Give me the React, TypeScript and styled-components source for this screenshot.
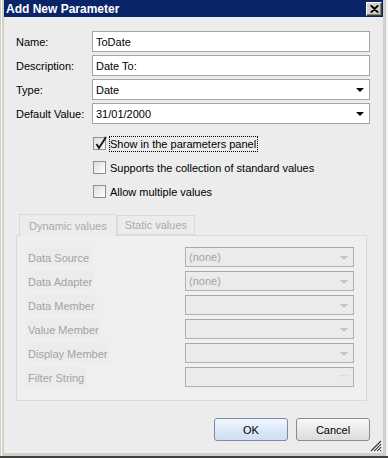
import { Fragment } from "react";
import styled, { createGlobalStyle } from "styled-components";

const GlobalStyle = createGlobalStyle`
    html, body {
        margin: 0;
        padding: 0;
        background: #d4d0c8;
    }
    * {
        box-sizing: border-box;
    }
`;

const Screen = styled.div`
    width: 388px;
    height: 458px;
    display: flex;
    flex-direction: column;
    overflow: hidden;
    font-family: "Liberation Sans", Arial, sans-serif;
    font-size: 11px;
    color: #000;
`;

const FrameRow = styled.div`
    flex: 1;
    display: flex;
`;

const Window = styled.div`
    width: 383px;
    display: flex;
    flex-direction: column;
    background: #d4d0c8;
    padding: 0 0 3px 4px;
    box-shadow: inset 1px 0 0 #cdc9c1, inset 2px 0 0 #ffffff;
`;

const RightEdge = styled.div`
    flex: 1;
    background: linear-gradient(to right, #d4d0c8 0 3px, #f3f3f3 3px);
`;

const BottomEdge = styled.div`
    height: 2px;
    background: #404040;
`;

const TitleBar = styled.div`
    height: 17px;
    background: #0a246a;
    display: flex;
    align-items: center;
    justify-content: space-between;
    padding: 0 1px 0 2px;
`;

const TitleText = styled.span`
    color: #fff;
    font-weight: bold;
    font-size: 12px;
    padding-top: 1px;
`;

const CloseButton = styled.div`
    width: 16px;
    height: 14px;
    background: #d4d0c8;
    border-top: 1px solid #fff;
    border-left: 1px solid #fff;
    border-right: 1px solid #404040;
    border-bottom: 1px solid #404040;
    box-shadow: inset -1px -1px 0 #808080;
    display: flex;
    align-items: center;
    justify-content: center;
`;

const Body = styled.div`
    position: relative;
    flex: 1;
    background: #ececec;
    padding: 14px 13px 0 12px;
    display: flex;
    flex-direction: column;
`;

const FormGrid = styled.div`
    display: grid;
    grid-template-columns: 76px 1fr;
    row-gap: 3px;
    align-items: center;
`;

const Label = styled.span`
    padding-top: 1px;
`;

const Field = styled.div`
    height: 21px;
    background: #fff;
    border: 1px solid #a4a4a4;
    display: flex;
    align-items: center;
    justify-content: space-between;
    padding: 0 5px 0 3px;
`;

const Arrow = styled.span<{ $disabled?: boolean }>`
    width: 0;
    height: 0;
    border-left: 4px solid transparent;
    border-right: 4px solid transparent;
    border-top: 4px solid ${p => (p.$disabled ? "#c4c4c4" : "#000")};
    margin-top: 1px;
`;

const CheckList = styled.div`
    margin-top: 11px;
    padding-left: 77px;
    display: flex;
    flex-direction: column;
    gap: 7px;
`;

const CheckRow = styled.div`
    height: 17px;
    display: flex;
    align-items: center;
    gap: 3px;
`;

const CheckBox = styled.span`
    position: relative;
    width: 13px;
    height: 13px;
    border: 1px solid #8f8f8f;
    background: linear-gradient(135deg, #dcdcdc, #ffffff);
`;

const CheckMark = styled.svg`
    position: absolute;
    left: 0;
    top: -3px;
`;

const CheckText = styled.span<{ $focused?: boolean }>`
    padding: 1px 1px 1px 0;
    border: 1px dotted ${p => (p.$focused ? "#000" : "transparent")};
`;

const TabStrip = styled.div`
    margin-top: 14px;
    padding-left: 3px;
    height: 21px;
    display: flex;
    align-items: flex-end;
    position: relative;
    z-index: 1;
`;

const Tab = styled.div<{ $active?: boolean }>`
    height: ${p => (p.$active ? "22px" : "20px")};
    padding: ${p => (p.$active ? "0 9px" : "0 7px")};
    margin-bottom: ${p => (p.$active ? "-1px" : "0")};
    display: flex;
    align-items: center;
    color: #aaaaaa;
    background: #ececec;
    border: 1px solid #dadada;
    border-bottom: ${p => (p.$active ? "none" : "1px solid #dadada")};
`;

const Panel = styled.div`
    width: 351px;
    border: 1px solid #dadada;
    background-color: #ececec;
    background-image: repeating-conic-gradient(#f5f5f5 0 25%, #e9e9e9 0 50%);
    background-size: 2px 2px;
    padding: 11px 12px 13px 9px;
    display: grid;
    grid-template-columns: 159px 1fr;
    row-gap: 4px;
    align-items: center;
`;

const PanelLabel = styled.span`
    justify-self: start;
    height: 20px;
    display: flex;
    align-items: center;
    padding: 1px 2px 0;
    background: #ececec;
    color: #a3a3a3;
`;

const DisabledField = styled.div`
    height: 20px;
    border: 1px solid #b2b2b2;
    border-top-color: #a8a8a8;
    background: #ebebeb;
    color: #a3a3a3;
    display: flex;
    align-items: center;
    justify-content: space-between;
    padding: 0 5px 0 3px;
`;

const Dots = styled.span`
    color: #c0c0c0;
    font-size: 10px;
    margin-bottom: 3px;
`;

const ButtonRow = styled.div`
    margin-top: 17px;
    display: flex;
    justify-content: flex-end;
    gap: 8px;
`;

const Button = styled.div<{ $primary?: boolean }>`
    width: 74px;
    height: 23px;
    border: 1px solid ${p => (p.$primary ? "#7a8aa6" : "#8a8a8a")};
    border-radius: 3px;
    background: ${p =>
        p.$primary
            ? "linear-gradient(#f2f7fe, #dde8f8 50%, #cfdef4)"
            : "linear-gradient(#f8f8f8, #eaeaea 50%, #dcdcdc)"};
    display: flex;
    align-items: center;
    justify-content: center;
    padding-top: 1px;
`;

const Grip = styled.svg`
    position: absolute;
    right: 1px;
    bottom: 1px;
`;

const fields = [
    { label: "Name:", value: "ToDate", combo: false },
    { label: "Description:", value: "Date To:", combo: false },
    { label: "Type:", value: "Date", combo: true },
    { label: "Default Value:", value: "31/01/2000", combo: true },
];

const checks = [
    { text: "Show in the parameters panel", checked: true },
    { text: "Supports the collection of standard values", checked: false },
    { text: "Allow multiple values", checked: false },
];

const panelRows = [
    { label: "Data Source", value: "(none)" },
    { label: "Data Adapter", value: "(none)" },
    { label: "Data Member", value: "" },
    { label: "Value Member", value: "" },
    { label: "Display Member", value: "" },
    { label: "Filter String", value: "", dots: true },
];

export default function App() {
    return (
        <Screen>
            <GlobalStyle />
            <FrameRow>
                <Window>
                    <TitleBar>
                        <TitleText>Add New Parameter</TitleText>
                        <CloseButton>
                            <svg width="9" height="8" viewBox="0 0 9 8">
                                <path d="M0.5 0.5 L7.5 7.5 M1.5 0.5 L8.5 7.5 M7.5 0.5 L0.5 7.5 M8.5 0.5 L1.5 7.5" stroke="#000" strokeWidth="1.1" />
                            </svg>
                        </CloseButton>
                    </TitleBar>
                    <Body>
                        <FormGrid>
                            {fields.map(f => (
                                <Fragment key={f.label}>
                                    <Label>{f.label}</Label>
                                    <Field>
                                        <span>{f.value}</span>
                                        {f.combo && <Arrow />}
                                    </Field>
                                </Fragment>
                            ))}
                        </FormGrid>
                        <CheckList>
                            {checks.map(c => (
                                <CheckRow key={c.text}>
                                    <CheckBox>
                                        {c.checked && (
                                            <CheckMark width="14" height="16" viewBox="0 0 14 16">
                                                <path d="M2.5 9 L5 13 L12 2" stroke="#1e1e1e" strokeWidth="2" fill="none" />
                                            </CheckMark>
                                        )}
                                    </CheckBox>
                                    <CheckText $focused={c.checked}>{c.text}</CheckText>
                                </CheckRow>
                            ))}
                        </CheckList>
                        <TabStrip>
                            <Tab $active>Dynamic values</Tab>
                            <Tab>Static values</Tab>
                        </TabStrip>
                        <Panel>
                            {panelRows.map(r => (
                                <Fragment key={r.label}>
                                    <PanelLabel>{r.label}</PanelLabel>
                                    <DisabledField>
                                        <span>{r.value}</span>
                                        {r.dots ? <Dots>···</Dots> : <Arrow $disabled />}
                                    </DisabledField>
                                </Fragment>
                            ))}
                        </Panel>
                        <ButtonRow>
                            <Button $primary>OK</Button>
                            <Button>Cancel</Button>
                        </ButtonRow>
                        <Grip width="12" height="12" viewBox="0 0 12 12">
                            <path d="M11 1 L1 11 M11 4 L4 11 M11 7 L7 11 M11 10 L10 11" stroke="#404040" strokeWidth="1.4" />
                            <path d="M12 2 L2 12 M12 5 L5 12 M12 8 L8 12" stroke="#ffffff" strokeWidth="0.8" />
                        </Grip>
                    </Body>
                </Window>
                <RightEdge />
            </FrameRow>
            <BottomEdge />
        </Screen>
    );
}
